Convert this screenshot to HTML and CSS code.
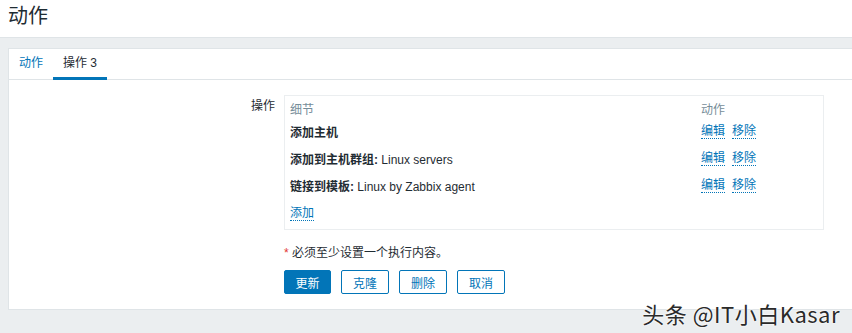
FILE: index.html
```html
<!DOCTYPE html>
<html lang="zh">
<head>
<meta charset="utf-8">
<link rel="stylesheet" href="styles.css">
</head>
<body>
<header class="page-header">
  <h1 class="page-title">动作</h1>
</header>
<main class="content">
  <section class="card">
    <nav class="tabs">
      <a class="tab">动作</a>
      <a class="tab tab-active">操作 3</a>
    </nav>
    <div class="form">
      <div class="form-row">
        <div class="form-label">操作</div>
        <div class="form-field">
          <div class="ops-table">
            <div class="ops-row ops-head">
              <div class="col-detail">细节</div>
              <div class="col-action">动作</div>
            </div>
            <div class="ops-row">
              <div class="col-detail"><b>添加主机</b></div>
              <div class="col-action"><a class="link">编辑</a><a class="link">移除</a></div>
            </div>
            <div class="ops-row">
              <div class="col-detail"><b>添加到主机群组:</b> Linux servers</div>
              <div class="col-action"><a class="link">编辑</a><a class="link">移除</a></div>
            </div>
            <div class="ops-row">
              <div class="col-detail"><b>链接到模板:</b> Linux by Zabbix agent</div>
              <div class="col-action"><a class="link">编辑</a><a class="link">移除</a></div>
            </div>
            <div class="ops-row">
              <div class="col-detail"><a class="link">添加</a></div>
            </div>
          </div>
        </div>
      </div>
      <div class="form-row note-row">
        <div class="form-label"></div>
        <div class="form-field note"><span class="req">*</span> 必须至少设置一个执行内容。</div>
      </div>
      <div class="form-row">
        <div class="form-label"></div>
        <div class="form-field buttons">
          <button class="btn btn-primary">更新</button>
          <button class="btn">克隆</button>
          <button class="btn">删除</button>
          <button class="btn">取消</button>
        </div>
      </div>
    </div>
  </section>
</main>
<div class="watermark">头条 @IT小白Kasar</div>
</body>
</html>
```

FILE: styles.css
```css
* { box-sizing: border-box; }
html, body {
  margin: 0;
  padding: 0;
  height: 333px;
  overflow: hidden;
}
body {
  background: #ebeef0;
  font-family: "Liberation Sans", Arial, "Noto Sans CJK SC", sans-serif;
  font-size: 12px;
  color: #1f2c33;
  position: relative;
}
.page-header {
  background: #fff;
  height: 38px;
  border-bottom: 1px solid #dfe4e7;
  padding: 0 8px;
  display: flex;
  align-items: center;
}
.page-title {
  margin: 0;
  font-size: 20px;
  font-weight: normal;
  color: #1f2c33;
  line-height: 24px;
  margin-top: -6px;
}
.content {
  padding: 10px 0 0 8px;
}
.card {
  background: #fff;
  border: 1px solid #dfe4e7;
  border-right: none;
  margin-right: -20px;
  height: 262px;
}
.tabs {
  display: flex;
  border-bottom: 1px solid #dfe4e7;
  height: 31px;
}
.tab {
  padding: 0 10px;
  line-height: 28px;
  height: 31px;
  color: #0275b8;
  border-bottom: 3px solid transparent;
  margin-bottom: -1px;
}
.tab-active {
  color: #1f2c33;
  border-bottom-color: #0275b8;
}
.form {
  padding-top: 15px;
}
.form-row {
  display: flex;
}
.form-label {
  width: 266px;
  flex: none;
  text-align: right;
  line-height: 18px;
  padding-top: 2px;
}
.form-field {
  margin-left: 9px;
}
.ops-table {
  width: 540px;
  height: 135px;
  border: 1px solid #ebeef0;
  padding: 2px 5px 0;
}
.ops-row {
  display: flex;
  height: 27px;
  align-items: center;
}
.ops-head {
  height: 20px;
  color: #768d99;
}
.col-detail {
  width: 411px;
}
.col-action {
  display: flex;
  gap: 7px;
}
.link {
  color: #0275b8;
  border-bottom: 1px dotted #0275b8;
  line-height: 14px;
}
b { font-weight: bold; }
.note-row {
  margin-top: 16px;
}
.note {
  line-height: 14px;
}
.req {
  color: #e33734;
}
.buttons {
  display: flex;
  gap: 10px;
  margin-top: 10px;
}
.btn {
  height: 24px;
  width: 48px;
  padding: 0;
  border: 1px solid #0275b8;
  border-radius: 2px;
  background: #fff;
  color: #0275b8;
  font-family: inherit;
  font-size: 12px;
}
.btn-primary {
  background: #0275b8;
  color: #fff;
  width: 47px;
}
.watermark {
  position: absolute;
  right: 12px;
  bottom: 7px;
  font-family: "Noto Sans CJK SC", "Liberation Sans", sans-serif;
  font-size: 22px;
  letter-spacing: 0.5px;
  color: #2a2a2a;
  line-height: 26px;
  text-shadow: 0 0 2px #fff, 0 0 2px #fff;
}
```
